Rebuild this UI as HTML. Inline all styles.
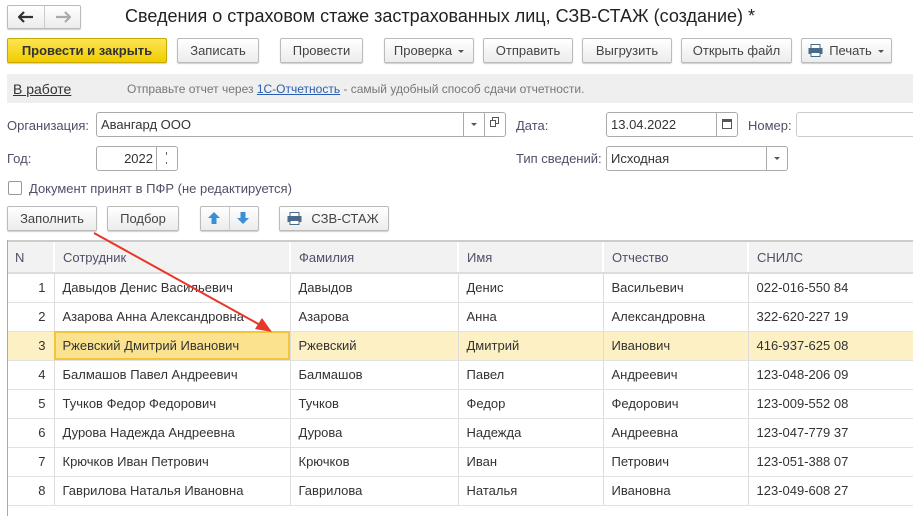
<!DOCTYPE html>
<html><head><meta charset="utf-8"><style>
*{box-sizing:border-box;margin:0;padding:0}
body{width:913px;height:516px;overflow:hidden;background:#fff;font-family:"Liberation Sans",Arial,sans-serif;font-size:13px;color:#333;position:relative}
.a{position:absolute}
.btn{position:absolute;height:25px;border:1px solid #bbb;border-radius:2px;background:linear-gradient(#fff,#ececec);box-shadow:0 1px 1px rgba(0,0,0,.2);color:#444;font-size:13px;line-height:23px;text-align:center;white-space:nowrap}
.inp{position:absolute;height:25px;border:1px solid #aaa;border-radius:3px;background:#fff;line-height:23px;padding-left:4px;color:#333}
.lbl{position:absolute;color:#4f4f68;font-size:13px;line-height:15px}
.dd{display:inline-block;width:0;height:0;border-left:3px solid transparent;border-right:3px solid transparent;border-top:3px solid #555;vertical-align:2px;margin-left:6px}
.tri{position:absolute;width:0;height:0;border-left:3px solid transparent;border-right:3px solid transparent;border-top:3px solid #555}
table{position:absolute;left:7px;top:240px;border-collapse:collapse;font-size:13px;width:910px}
td,th{height:29px;padding:0 8px;text-align:left;font-weight:normal;border-bottom:1px solid #e2e2e2;border-left:1px solid #ddd;white-space:nowrap;color:#333}
th{background:#f2f2f2;color:#4f4f68;height:32px;border-left:2px solid #fff;border-top:2px solid #ccc;border-bottom:2px solid #ddd}
td:first-child{text-align:right;border-left:none;padding-right:8px}
th:first-child{border-left:none}
tr.sel td{background:#fcf0c4}
tr.sel td.c{background:#fbe28f;outline:2px solid #f2c63a;outline-offset:-2px}
</style></head><body>
<div class="btn" style="left:7px;top:5px;width:74px;height:24px"></div>
<div class="a" style="left:44px;top:6px;width:1px;height:22px;background:#ccc"></div>
<svg class="a" style="left:18px;top:11px" width="16" height="12"><path d="M1 6H15M6 1L1 6L6 11" stroke="#333" stroke-width="2.2" fill="none"/></svg>
<svg class="a" style="left:55px;top:11px" width="16" height="12"><path d="M1 6H15M10 1L15 6L10 11" stroke="#aaa" stroke-width="2.2" fill="none"/></svg>
<div class="a" style="left:125px;top:6px;font-size:18px;color:#222">Сведения о страховом стаже застрахованных лиц, СЗВ-СТАЖ (создание) *</div>

<div class="btn" style="left:7px;top:38px;width:160px;background:linear-gradient(#fbe552,#f1cd00);border-color:#c9a800;color:#333;font-weight:bold">Провести и закрыть</div>
<div class="btn" style="left:177px;top:38px;width:82px">Записать</div>
<div class="btn" style="left:280px;top:38px;width:83px">Провести</div>
<div class="btn" style="left:384px;top:38px;width:90px">Проверка<span class="dd"></span></div>
<div class="btn" style="left:483px;top:38px;width:90px">Отправить</div>
<div class="btn" style="left:582px;top:38px;width:90px">Выгрузить</div>
<div class="btn" style="left:681px;top:38px;width:111px">Открыть файл</div>
<div class="btn" style="left:801px;top:38px;width:91px;padding-left:20px">Печать<span class="dd"></span></div>
<svg class="a" style="left:808px;top:44px" width="15" height="13"><rect x="3" y="0.5" width="9" height="4" fill="#fff" stroke="#4a6a8a"/><rect x="0.5" y="4" width="14" height="6" fill="#4a6a8a"/><rect x="3" y="8.5" width="9" height="4" fill="#fff" stroke="#4a6a8a"/></svg>

<div class="a" style="left:7px;top:74px;width:906px;height:29px;background:#efefef"></div>
<div class="a" style="left:13px;top:81px;font-size:14px;color:#333;text-decoration:underline">В работе</div>
<div class="a" style="left:127px;top:82px;font-size:12px;color:#777">Отправьте отчет через <span style="color:#2a5db0;text-decoration:underline">1С-Отчетность</span> - самый удобный способ сдачи отчетности.</div>

<div class="lbl" style="left:7px;top:118px">Организация:</div>
<div class="inp" style="left:96px;top:112px;width:410px">Авангард ООО</div>
<div class="a" style="left:463px;top:113px;width:1px;height:23px;background:#aaa"></div>
<div class="a" style="left:484px;top:113px;width:1px;height:23px;background:#aaa"></div>
<div class="tri" style="left:471px;top:123px"></div>
<div class="a" style="left:492px;top:117px;width:7px;height:7px;border:1px solid #555"></div>
<div class="a" style="left:490px;top:120px;width:6px;height:7px;border:1px solid #555;background:#fff"></div>
<div class="lbl" style="left:516px;top:118px">Дата:</div>
<div class="inp" style="left:606px;top:112px;width:132px">13.04.2022</div>
<div class="a" style="left:716px;top:113px;width:1px;height:23px;background:#aaa"></div>
<div class="a" style="left:722px;top:119px;width:10px;height:10px;border:1px solid #555;border-top-width:3px"></div>
<div class="lbl" style="left:748px;top:118px">Номер:</div>
<div class="inp" style="left:796px;top:112px;width:130px;border-color:#ccc"></div>

<div class="lbl" style="left:7px;top:151px">Год:</div>
<div class="inp" style="left:96px;top:146px;width:82px;text-align:right;padding-right:24px">2022</div>
<div class="a" style="left:156px;top:147px;width:1px;height:23px;background:#aaa"></div>
<div class="a" style="left:166px;top:152px;width:1px;height:3px;background:#666"></div>
<div class="a" style="left:166px;top:162px;width:1px;height:2px;background:#666"></div>
<div class="lbl" style="left:516px;top:151px">Тип сведений:</div>
<div class="inp" style="left:606px;top:146px;width:182px">Исходная</div>
<div class="a" style="left:766px;top:147px;width:1px;height:23px;background:#aaa"></div>
<div class="tri" style="left:774px;top:157px"></div>

<div class="a" style="left:8px;top:181px;width:14px;height:14px;border:1px solid #999;border-radius:2px"></div>
<div class="lbl" style="left:29px;top:181px">Документ принят в ПФР (не редактируется)</div>

<div class="btn" style="left:7px;top:206px;width:90px">Заполнить</div>
<div class="btn" style="left:107px;top:206px;width:72px">Подбор</div>
<div class="btn" style="left:200px;top:206px;width:59px"></div>
<div class="a" style="left:229px;top:207px;width:1px;height:23px;background:#ccc"></div>
<svg class="a" style="left:207px;top:211px" width="14" height="14"><path d="M7 1L13 7H9.5V13H4.5V7H1Z" fill="#3a8fd6"/></svg>
<svg class="a" style="left:236px;top:211px" width="14" height="14"><path d="M7 13L13 7H9.5V1H4.5V7H1Z" fill="#3a8fd6"/></svg>
<div class="btn" style="left:279px;top:206px;width:110px;padding-left:22px">СЗВ-СТАЖ</div>
<svg class="a" style="left:287px;top:212px" width="15" height="13"><rect x="3" y="0.5" width="9" height="4" fill="#fff" stroke="#4a6a8a"/><rect x="0.5" y="4" width="14" height="6" fill="#4a6a8a"/><rect x="3" y="8.5" width="9" height="4" fill="#fff" stroke="#4a6a8a"/></svg>

<table>
<tr><th style="width:47px">N</th><th style="width:236px">Сотрудник</th><th style="width:168px">Фамилия</th><th style="width:145px">Имя</th><th style="width:145px">Отчество</th><th>СНИЛС</th></tr>
<tr><td>1</td><td>Давыдов Денис Васильевич</td><td>Давыдов</td><td>Денис</td><td>Васильевич</td><td>022-016-550 84</td></tr>
<tr><td>2</td><td>Азарова Анна Александровна</td><td>Азарова</td><td>Анна</td><td>Александровна</td><td>322-620-227 19</td></tr>
<tr class="sel"><td>3</td><td class="c">Ржевский Дмитрий Иванович</td><td>Ржевский</td><td>Дмитрий</td><td>Иванович</td><td>416-937-625 08</td></tr>
<tr><td>4</td><td>Балмашов Павел Андреевич</td><td>Балмашов</td><td>Павел</td><td>Андреевич</td><td>123-048-206 09</td></tr>
<tr><td>5</td><td>Тучков Федор Федорович</td><td>Тучков</td><td>Федор</td><td>Федорович</td><td>123-009-552 08</td></tr>
<tr><td>6</td><td>Дурова Надежда Андреевна</td><td>Дурова</td><td>Надежда</td><td>Андреевна</td><td>123-047-779 37</td></tr>
<tr><td>7</td><td>Крючков Иван Петрович</td><td>Крючков</td><td>Иван</td><td>Петрович</td><td>123-051-388 07</td></tr>
<tr><td>8</td><td>Гаврилова Наталья Ивановна</td><td>Гаврилова</td><td>Наталья</td><td>Ивановна</td><td>123-049-608 27</td></tr>
</table>
<div class="a" style="left:7px;top:240px;width:1px;height:276px;background:#aaa;z-index:2"></div>
<svg class="a" style="left:0;top:0;z-index:3" width="913" height="516"><line x1="94" y1="233" x2="262" y2="326" stroke="#e8372a" stroke-width="2"/><path d="M272 332L255 329L262 318Z" fill="#e8372a"/></svg>
</body></html>
